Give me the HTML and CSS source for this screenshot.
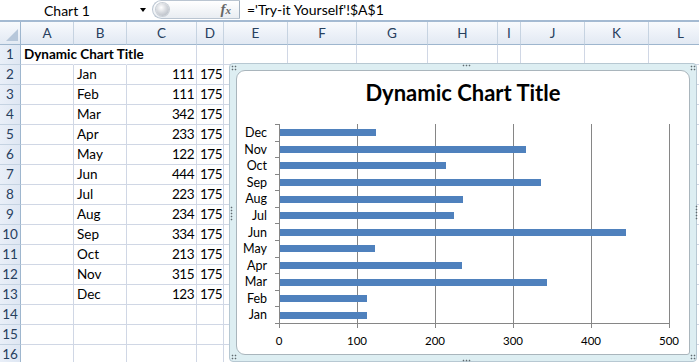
FILE: index.html
```html
<!DOCTYPE html>
<html>
<head>
<meta charset="utf-8">
<link rel="stylesheet" href="styles.css">
</head>
<body>
<div class="app">
  <div class="formula-bar">
    <div class="name-box"><span class="name">Chart 1</span><span class="dd-arrow"></span></div>
    <div class="fx-pill"><span class="knob"></span><span class="fx">f<span class="fx-x">x</span></span></div>
    <div class="formula">='Try-it Yourself'!$A$1</div>
  </div>
  <div class="sheet-wrap">
    <div class="sheet">
      <div class="h corner"></div><div class="h">A</div><div class="h">B</div><div class="h">C</div><div class="h">D</div><div class="h">E</div><div class="h">F</div><div class="h">G</div><div class="h">H</div><div class="h">I</div><div class="h">J</div><div class="h">K</div><div class="h">L</div>

      <div class="r">1</div><div class="c title-cell nob">Dynamic Chart Title</div><div class="c nob"></div><div class="c"></div><div class="c"></div><div class="c"></div><div class="c"></div><div class="c"></div><div class="c"></div><div class="c"></div><div class="c"></div><div class="c"></div><div class="c"></div>

      <div class="r">2</div><div class="c"></div><div class="c">Jan</div><div class="c num">111</div><div class="c num">175</div><div class="c"></div><div class="c"></div><div class="c"></div><div class="c"></div><div class="c"></div><div class="c"></div><div class="c"></div><div class="c"></div>
      <div class="r">3</div><div class="c"></div><div class="c">Feb</div><div class="c num">111</div><div class="c num">175</div><div class="c"></div><div class="c"></div><div class="c"></div><div class="c"></div><div class="c"></div><div class="c"></div><div class="c"></div><div class="c"></div>
      <div class="r">4</div><div class="c"></div><div class="c">Mar</div><div class="c num">342</div><div class="c num">175</div><div class="c"></div><div class="c"></div><div class="c"></div><div class="c"></div><div class="c"></div><div class="c"></div><div class="c"></div><div class="c"></div>
      <div class="r">5</div><div class="c"></div><div class="c">Apr</div><div class="c num">233</div><div class="c num">175</div><div class="c"></div><div class="c"></div><div class="c"></div><div class="c"></div><div class="c"></div><div class="c"></div><div class="c"></div><div class="c"></div>
      <div class="r">6</div><div class="c"></div><div class="c">May</div><div class="c num">122</div><div class="c num">175</div><div class="c"></div><div class="c"></div><div class="c"></div><div class="c"></div><div class="c"></div><div class="c"></div><div class="c"></div><div class="c"></div>
      <div class="r">7</div><div class="c"></div><div class="c">Jun</div><div class="c num">444</div><div class="c num">175</div><div class="c"></div><div class="c"></div><div class="c"></div><div class="c"></div><div class="c"></div><div class="c"></div><div class="c"></div><div class="c"></div>
      <div class="r">8</div><div class="c"></div><div class="c">Jul</div><div class="c num">223</div><div class="c num">175</div><div class="c"></div><div class="c"></div><div class="c"></div><div class="c"></div><div class="c"></div><div class="c"></div><div class="c"></div><div class="c"></div>
      <div class="r">9</div><div class="c"></div><div class="c">Aug</div><div class="c num">234</div><div class="c num">175</div><div class="c"></div><div class="c"></div><div class="c"></div><div class="c"></div><div class="c"></div><div class="c"></div><div class="c"></div><div class="c"></div>
      <div class="r">10</div><div class="c"></div><div class="c">Sep</div><div class="c num">334</div><div class="c num">175</div><div class="c"></div><div class="c"></div><div class="c"></div><div class="c"></div><div class="c"></div><div class="c"></div><div class="c"></div><div class="c"></div>
      <div class="r">11</div><div class="c"></div><div class="c">Oct</div><div class="c num">213</div><div class="c num">175</div><div class="c"></div><div class="c"></div><div class="c"></div><div class="c"></div><div class="c"></div><div class="c"></div><div class="c"></div><div class="c"></div>
      <div class="r">12</div><div class="c"></div><div class="c">Nov</div><div class="c num">315</div><div class="c num">175</div><div class="c"></div><div class="c"></div><div class="c"></div><div class="c"></div><div class="c"></div><div class="c"></div><div class="c"></div><div class="c"></div>
      <div class="r">13</div><div class="c"></div><div class="c">Dec</div><div class="c num">123</div><div class="c num">175</div><div class="c"></div><div class="c"></div><div class="c"></div><div class="c"></div><div class="c"></div><div class="c"></div><div class="c"></div><div class="c"></div>
      <div class="r">14</div><div class="c"></div><div class="c"></div><div class="c"></div><div class="c"></div><div class="c"></div><div class="c"></div><div class="c"></div><div class="c"></div><div class="c"></div><div class="c"></div><div class="c"></div><div class="c"></div>
      <div class="r">15</div><div class="c"></div><div class="c"></div><div class="c"></div><div class="c"></div><div class="c"></div><div class="c"></div><div class="c"></div><div class="c"></div><div class="c"></div><div class="c"></div><div class="c"></div><div class="c"></div>
      <div class="r">16</div><div class="c"></div><div class="c"></div><div class="c"></div><div class="c"></div><div class="c"></div><div class="c"></div><div class="c"></div><div class="c"></div><div class="c"></div><div class="c"></div><div class="c"></div><div class="c"></div>
    </div>

    <div class="chart">
      <span class="grip g-tl"></span><span class="grip g-tm"></span><span class="grip g-tr"></span>
      <span class="grip g-lm"></span><span class="grip g-rm"></span>
      <span class="grip g-bl"></span><span class="grip g-bm"></span><span class="grip g-br"></span>
      <div class="chart-inner">
        <div class="chart-title">Dynamic Chart Title</div>
        <div class="plot-row">
          <div class="ylabels">
            <div>Dec</div><div>Nov</div><div>Oct</div><div>Sep</div><div>Aug</div><div>Jul</div><div>Jun</div><div>May</div><div>Apr</div><div>Mar</div><div>Feb</div><div>Jan</div>
          </div>
          <div class="yticks"></div>
          <div class="plot">
            <div class="bar-row"><div class="bar" style="width:95.9px"></div></div>
            <div class="bar-row"><div class="bar" style="width:245.7px"></div></div>
            <div class="bar-row"><div class="bar" style="width:166.1px"></div></div>
            <div class="bar-row"><div class="bar" style="width:260.5px"></div></div>
            <div class="bar-row"><div class="bar" style="width:182.5px"></div></div>
            <div class="bar-row"><div class="bar" style="width:173.9px"></div></div>
            <div class="bar-row"><div class="bar" style="width:346.3px"></div></div>
            <div class="bar-row"><div class="bar" style="width:95.2px"></div></div>
            <div class="bar-row"><div class="bar" style="width:181.7px"></div></div>
            <div class="bar-row"><div class="bar" style="width:266.8px"></div></div>
            <div class="bar-row"><div class="bar" style="width:86.6px"></div></div>
            <div class="bar-row"><div class="bar" style="width:86.6px"></div></div>
          </div>
        </div>
        <div class="xticks"></div>
        <div class="xlabels"><span>0</span><span>100</span><span>200</span><span>300</span><span>400</span><span>500</span></div>
      </div>
    </div>
  </div>
</div>
</body>
</html>
```

FILE: styles.css
```css
html, body {
  margin: 0;
  padding: 0;
  background: #fff;
}
body {
  width: 699px;
  height: 362px;
  overflow: hidden;
  font-family: Lato, "Noto Sans", sans-serif;
  color: #000;
}
.app {
  width: 699px;
  height: 362px;
  overflow: hidden;
}

/* formula bar */
.formula-bar {
  display: flex;
  height: 20px;
  border-bottom: 2px solid #a4bad2;
  box-sizing: content-box;
}
.name-box {
  width: 152px;
  box-sizing: border-box;
  padding-left: 44px;
  display: flex;
  align-items: center;
  font-size: 14px;
}
.dd-arrow {
  margin-left: auto;
  margin-right: 6px;
  width: 0;
  height: 0;
  border-left: 3.5px solid transparent;
  border-right: 3.5px solid transparent;
  border-top: 4px solid #000;
}
.fx-pill {
  width: 88px;
  height: 19px;
  box-sizing: border-box;
  border: 1px solid #bac5d1;
  border-right-color: #a3b1c0;
  border-radius: 10px 0 0 10px;
  background: linear-gradient(#ffffff, #e9edf2);
  display: flex;
  align-items: center;
  padding-left: 3px;
}
.knob {
  width: 13px;
  height: 13px;
  border-radius: 50%;
  background: radial-gradient(circle at 40% 35%, #ffffff 0, #d6d9de 45%, #a9b0b9 100%);
  box-shadow: 0 0 0 1px #c9cfd6;
}
.fx {
  margin-left: auto;
  margin-right: 8px;
  font-family: "Liberation Serif", serif;
  font-style: italic;
  font-weight: bold;
  font-size: 15px;
  line-height: 17px;
  color: #666;
}
.fx-x {
  font-size: 11px;
}
.formula {
  padding-left: 7px;
  font-size: 14px;
  line-height: 20px;
}

/* sheet */
.sheet-wrap {
  position: relative;
}
.sheet {
  display: grid;
  grid-template-columns: 21px 53px 53px 70px 27px 64px 69px 71px 70px 23px 64px 64px 64px;
  grid-template-rows: 23px repeat(16, 20px);
}
.h {
  background: linear-gradient(#f8fafd, #e2e9f3);
  border-right: 1px solid #c6d3e1;
  border-bottom: 1px solid #9eb6ce;
  text-align: center;
  font-size: 13.5px;
  line-height: 22px;
  color: #27405e;
  box-sizing: border-box;
}
.corner {
  position: relative;
  border-right-color: #9eb6ce;
}
.corner::after {
  content: "";
  position: absolute;
  right: 2px;
  bottom: 3px;
  width: 12px;
  height: 12px;
  background: #b7c7da;
  clip-path: polygon(100% 0, 100% 100%, 0 100%);
}
.r {
  background: linear-gradient(90deg, #e9eff8, #dfe7f3);
  border-right: 1px solid #9eb6ce;
  border-bottom: 1px solid #c5d3e2;
  text-align: center;
  font-size: 13.5px;
  line-height: 19px;
  color: #27405e;
  box-sizing: border-box;
}
.c {
  border-right: 1px solid #d0d7e5;
  border-bottom: 1px solid #d0d7e5;
  box-sizing: border-box;
  font-size: 13.5px;
  line-height: 19px;
  padding: 0 3px;
  white-space: nowrap;
}
.c.nob {
  border-right-color: transparent;
}
.title-cell {
  font-weight: bold;
  overflow: visible;
  position: relative;
  z-index: 1;
}
.num {
  text-align: right;
  padding-right: 2px;
  letter-spacing: -0.5px;
}

/* chart */
.chart {
  position: absolute;
  left: 229px;
  top: 41px;
  width: 468px;
  height: 299px;
  box-sizing: border-box;
  border: 1px solid #b7c8d2;
  border-radius: 4px;
  background: #ddeef2;
  padding: 6px;
}
.chart-inner {
  height: 100%;
  box-sizing: border-box;
  background: #fff;
  border: 1px solid #a9b5bc;
  border-radius: 9px 9px 3px 9px;
  display: flex;
  flex-direction: column;
}
.chart-title {
  height: 53px;
  box-sizing: border-box;
  padding-top: 11px;
  text-align: center;
  font-weight: bold;
  font-size: 22px;
  line-height: 22px;
  flex: none;
}
.plot-row {
  display: flex;
  height: 200px;
  flex: none;
}
.ylabels {
  width: 30px;
  margin-right: 8px;
  height: 199px;
  padding-top: 1px;
  box-sizing: content-box;
  display: grid;
  grid-template-rows: repeat(12, 1fr);
  font-size: 12.5px;
  text-align: right;
  line-height: 16.58px;
}
.yticks {
  width: 4px;
  height: 200px;
  background: repeating-linear-gradient(to bottom, #868686 0, #868686 1px, transparent 1px, transparent 16.583px);
}
.plot {
  width: 391px;
  height: 200px;
  box-sizing: border-box;
  border-left: 1px solid #868686;
  border-bottom: 1px solid #868686;
  background: repeating-linear-gradient(to right, transparent 0, transparent 77px, #868686 77px, #868686 78px);
  display: grid;
  grid-template-rows: repeat(12, 1fr);
}
.bar-row {
  display: flex;
  align-items: center;
  padding-top: 1px;
}
.bar {
  height: 7px;
  background: #4f81bd;
}
.xticks {
  margin-left: 42px;
  width: 391px;
  height: 4px;
  flex: none;
  background: repeating-linear-gradient(to right, #868686 0, #868686 1px, transparent 1px, transparent 78px);
}
.xlabels {
  display: grid;
  grid-template-columns: repeat(6, 78px);
  margin-left: 3px;
  margin-top: 6px;
  font-size: 11.5px;
  line-height: 14px;
  text-align: center;
}

/* selection grips */
.grip {
  position: absolute;
  background-image: radial-gradient(circle, #5f6a70 0, #5f6a70 0.7px, transparent 1.1px);
  background-size: 3px 3px;
}
.g-tl { left: 1px; top: 1px; width: 6px; height: 6px; }
.g-tm { left: 232px; top: 0; width: 9px; height: 3px; }
.g-tr { left: 460px; top: 1px; width: 6px; height: 6px; }
.g-lm { left: 0; top: 142px; width: 3px; height: 15px; }
.g-rm { left: 465px; top: 141px; width: 3px; height: 15px; }
.g-bl { left: 1px; top: 290px; width: 6px; height: 6px; }
.g-bm { left: 232px; top: 295px; width: 9px; height: 3px; }
.g-br { left: 460px; top: 290px; width: 6px; height: 6px; }
```
